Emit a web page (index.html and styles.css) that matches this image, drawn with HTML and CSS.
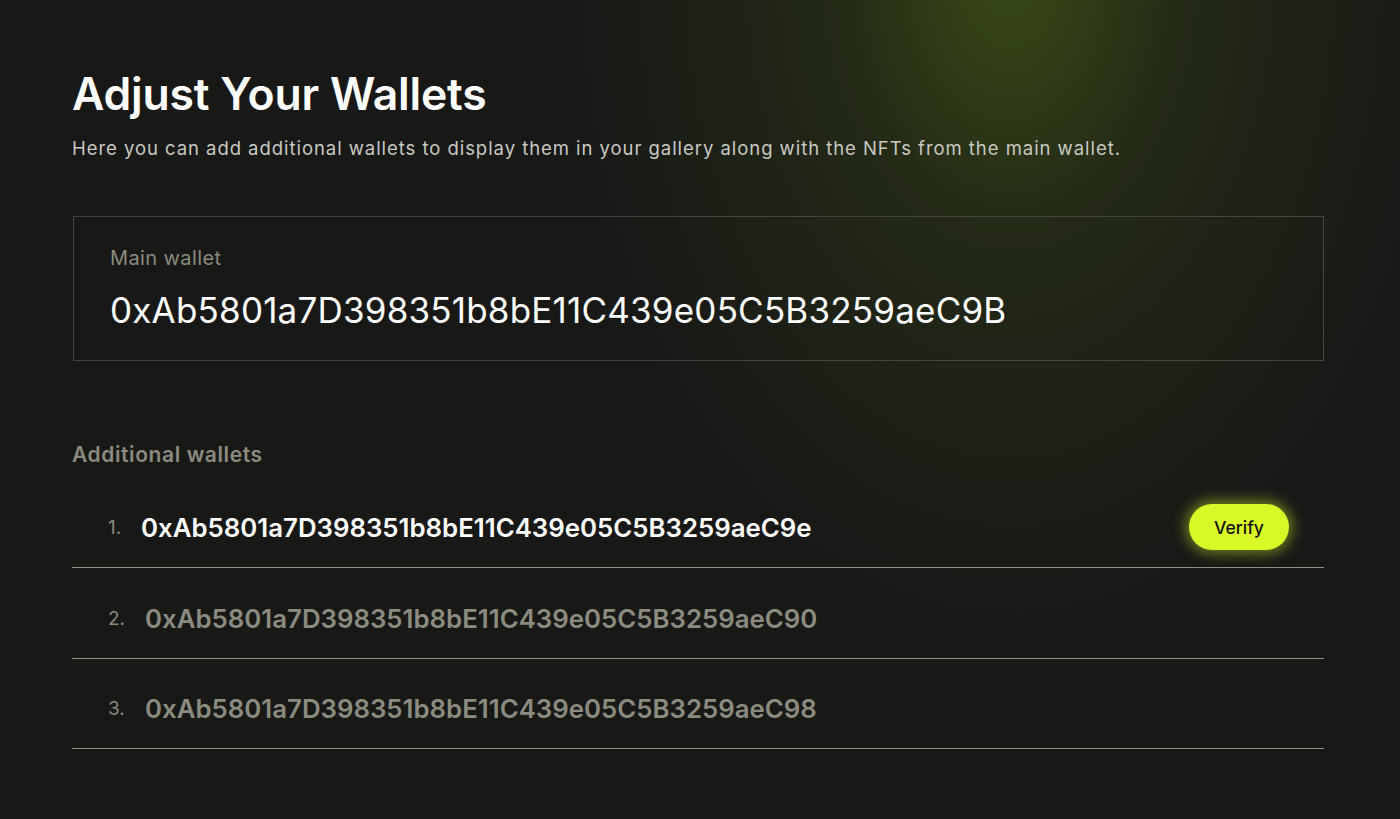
FILE: index.html
```html
<!DOCTYPE html>
<html lang="en">
<head>
<meta charset="utf-8">
<title>Adjust Your Wallets</title>
<link rel="stylesheet" href="styles.css">
</head>
<body>
<main class="page">
  <header class="intro">
    <h1 class="title">Adjust Your Wallets</h1>
    <p class="subtitle">Here you can add additional wallets to display them in your gallery along with the NFTs from the main wallet.</p>
  </header>

  <section class="main-wallet">
    <div class="main-label">Main wallet</div>
    <div class="main-address">0xAb5801a7D398351b8bE11C439e05C5B3259aeC9B</div>
  </section>

  <section class="additional">
    <h2 class="section-label">Additional wallets</h2>
    <ol class="wallet-list">
      <li class="wallet-row active">
        <span class="idx">1.</span>
        <span class="addr">0xAb5801a7D398351b8bE11C439e05C5B3259aeC9e</span>
        <button class="verify">Verify</button>
      </li>
      <li class="wallet-row">
        <span class="idx">2.</span>
        <span class="addr">0xAb5801a7D398351b8bE11C439e05C5B3259aeC90</span>
      </li>
      <li class="wallet-row">
        <span class="idx">3.</span>
        <span class="addr">0xAb5801a7D398351b8bE11C439e05C5B3259aeC98</span>
      </li>
    </ol>
  </section>
</main>
</body>
</html>
```
FILE: styles.css
```css
* { box-sizing: border-box; }
html, body {
  margin: 0;
  height: 100%;
}
body {
  background-color: #181817;
  background-image:
    radial-gradient(ellipse 440px 660px at 1010px -30px, rgba(74, 98, 22, 0.68) 0%, rgba(54, 72, 20, 0.36) 40%, rgba(24, 24, 23, 0) 100%);
  background-repeat: no-repeat;
  color: #ffffff;
  font-family: "Inter", "Noto Sans", sans-serif;
  overflow: hidden;
}
.page {
  width: 1400px;
  height: 819px;
  padding: 66px 76px 0 72px;
}
.title {
  margin: 0;
  font-size: 44.5px;
  line-height: 56px;
  font-weight: 600;
  letter-spacing: -0.2px;
}
.subtitle {
  margin: 14px 0 0;
  font-size: 18.5px;
  line-height: 24px;
  letter-spacing: 0.95px;
  color: #c9c9c2;
  font-weight: 400;
}
.main-wallet {
  margin-top: 56px;
  margin-left: 1px;
  border: 1px solid #45453f;
  height: 145px;
  padding: 28px 36px 0;
}
.main-label {
  font-size: 20px;
  line-height: 26px;
  letter-spacing: 0.4px;
  color: #8b8b7f;
}
.main-address {
  margin-top: 16px;
  font-size: 35px;
  line-height: 46px;
  letter-spacing: 0.2px;
  color: #ffffff;
  font-weight: 400;
}
.additional {
  margin-top: 81px;
}
.section-label {
  margin: 0;
  font-size: 21px;
  line-height: 26px;
  font-weight: 600;
  letter-spacing: 0.6px;
  color: #8b8b7f;
}
.wallet-list {
  list-style: none;
  margin: 10px 0 0;
  padding: 0;
}
.wallet-row {
  display: flex;
  align-items: center;
  height: 90px;
  padding-top: 10px;
  border-bottom: 1px solid #8f8f86;
  padding-left: 36px;
  padding-right: 35px;
  color: #8b8b7f;
}
.wallet-row:nth-child(2) { height: 91px; }
.idx {
  font-size: 19px;
  width: 37px;
  color: #8b8b7f;
}
.addr {
  font-size: 25.8px;
  font-weight: 600;
  flex: 1;
}
.wallet-row.active .idx { width: 33px; }
.wallet-row.active .addr { color: #ffffff; }
.verify {
  border: none;
  background: #d9f827;
  color: #121212;
  font-family: inherit;
  font-size: 17.5px;
  font-weight: 500;
  height: 46px;
  width: 100px;
  margin-top: -1px;
  border-radius: 23px;
  box-shadow: 0 0 14px 3px rgba(217, 248, 39, 0.5);
  cursor: pointer;
}
```
